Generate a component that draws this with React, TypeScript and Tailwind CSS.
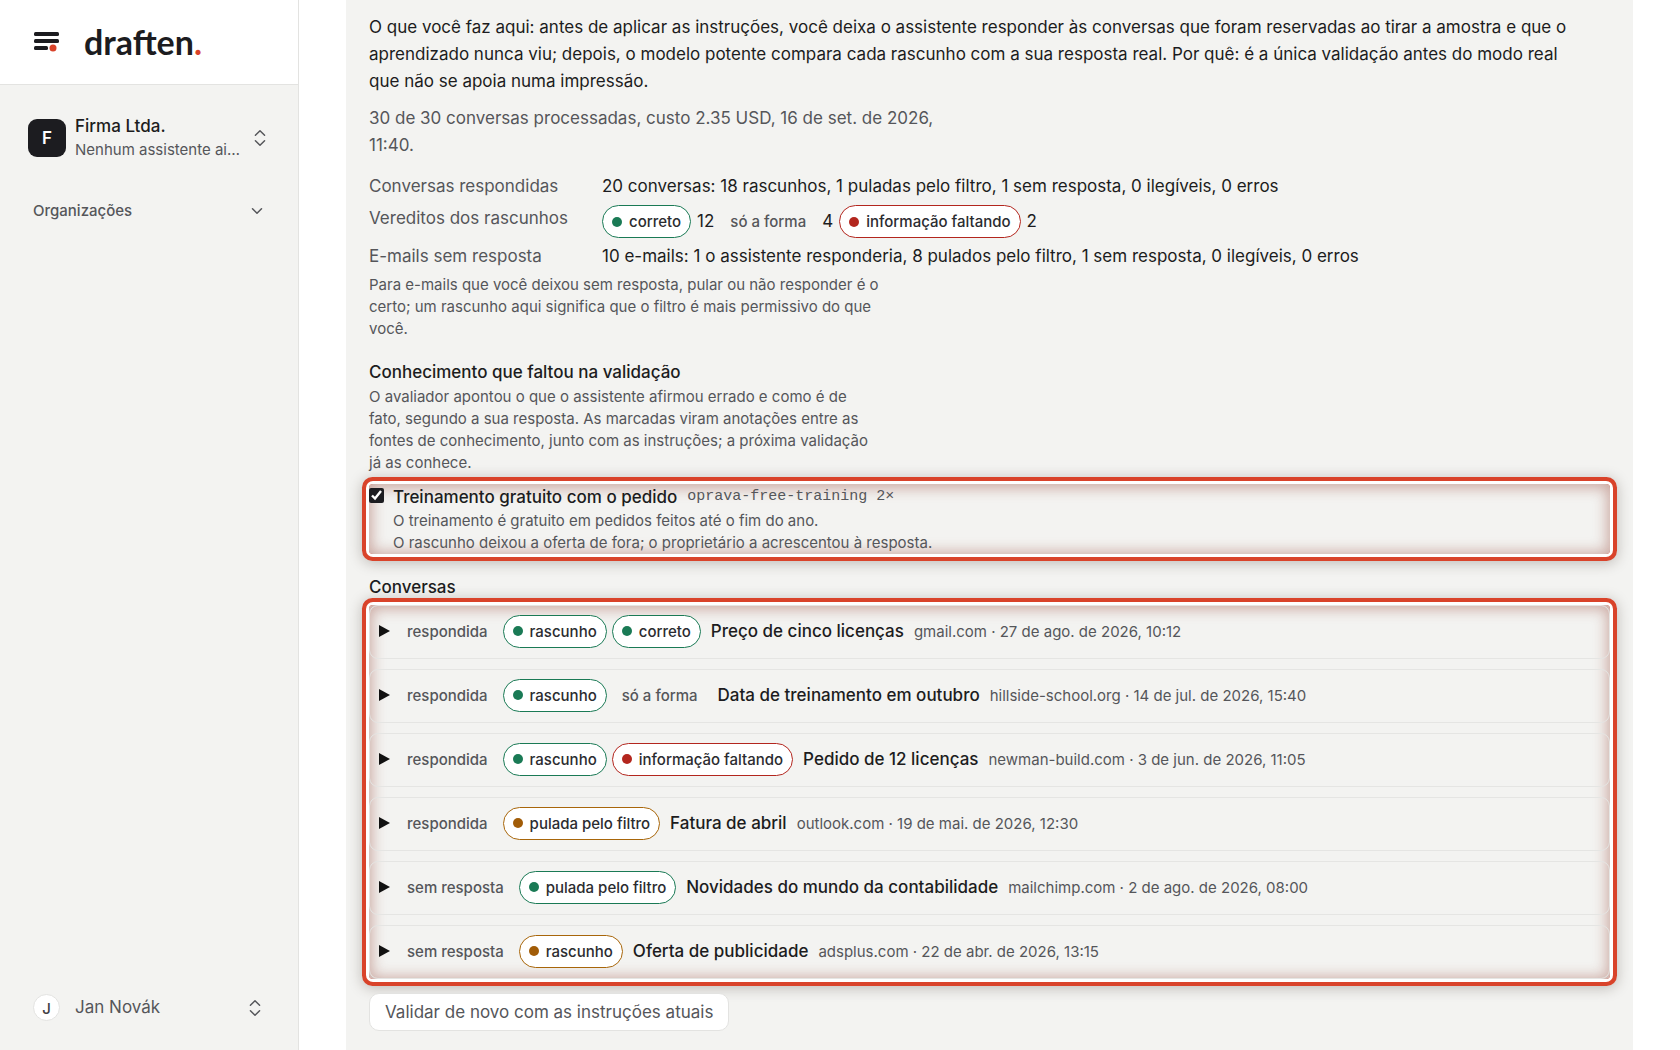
import React from "react";
import { ChevronDown, ChevronsUpDown } from "lucide-react";

type Tone = "green" | "red" | "amber" | "plain";

const ring =
  "rounded-[4px] shadow-[0_0_0_3px_#ffffff,0_0_0_7px_#d9432a,0_2px_14px_7px_rgba(50,35,25,0.28),inset_0_1px_14px_3px_rgba(140,50,35,0.38)]";

const border: Record<Tone, string> = {
  green: "border-[#1a7a55]",
  red: "border-[#b3261e]",
  amber: "border-[#a8660a]",
  plain: "",
};
const dot: Record<Tone, string> = {
  green: "bg-[#1a7a55]",
  red: "bg-[#b3261e]",
  amber: "bg-[#a15c07]",
  plain: "",
};

function Pill({ tone, children }: { tone: Tone; children: React.ReactNode }) {
  if (tone === "plain")
    return <span className="px-[10px] text-[15px] font-medium text-[#55565a]">{children}</span>;
  return (
    <span
      className={`inline-flex h-[33px] items-center gap-[7px] rounded-full border bg-white px-[9px] text-[15px] font-medium text-[#2b2c30] ${border[tone]}`}
    >
      <span className={`size-[10px] rounded-full ${dot[tone]}`} />
      {children}
    </span>
  );
}

type Row = { kind: string; pills: [Tone, string][]; title: string; meta: string };

const rows: Row[] = [
  { kind: "respondida", pills: [["green", "rascunho"], ["green", "correto"]], title: "Preço de cinco licenças", meta: "gmail.com · 27 de ago. de 2026, 10:12" },
  { kind: "respondida", pills: [["green", "rascunho"], ["plain", "só a forma"]], title: "Data de treinamento em outubro", meta: "hillside-school.org · 14 de jul. de 2026, 15:40" },
  { kind: "respondida", pills: [["green", "rascunho"], ["red", "informação faltando"]], title: "Pedido de 12 licenças", meta: "newman-build.com · 3 de jun. de 2026, 11:05" },
  { kind: "respondida", pills: [["amber", "pulada pelo filtro"]], title: "Fatura de abril", meta: "outlook.com · 19 de mai. de 2026, 12:30" },
  { kind: "sem resposta", pills: [["green", "pulada pelo filtro"]], title: "Novidades do mundo da contabilidade", meta: "mailchimp.com · 2 de ago. de 2026, 08:00" },
  { kind: "sem resposta", pills: [["amber", "rascunho"]], title: "Oferta de publicidade", meta: "adsplus.com · 22 de abr. de 2026, 13:15" },
];

function Sidebar() {
  return (
    <aside className="flex w-[299px] shrink-0 flex-col border-r border-[#e3e3e1] bg-[#f3f3f1]">
      <a href="#" className="flex h-[85px] items-center gap-6 border-b border-[#e3e3e1] bg-white pl-[33px]">
        <svg width="27" height="20" viewBox="0 0 27 20" aria-hidden="true">
          <g fill="#1c1c20">
            <rect x="1" y="0" width="25" height="4" rx="1.5" />
            <rect x="1" y="7" width="25" height="4" rx="1.5" />
            <rect x="1" y="14" width="14" height="4" rx="1.5" />
          </g>
          <circle cx="20" cy="16" r="4.5" fill="#fff" />
          <circle cx="20" cy="16" r="3.5" fill="#d9432a" />
        </svg>
        <span className="font-['Lato',sans-serif] text-[34px] leading-none font-bold text-[#1c1c20]">
          draften<span className="text-[#d9432a]">.</span>
        </span>
      </a>
      <button type="button" className="mt-[29px] flex items-center pr-[27px] pl-[28px] text-left">
        <span className="grid size-[38px] shrink-0 place-items-center rounded-[9px] bg-[#1c1c20] text-[17px] font-semibold text-white">F</span>
        <span className="ml-[9px]">
          <span className="block text-[17px] leading-[24px] font-medium text-[#1c1c20]">Firma Ltda.</span>
          <span className="block text-[15px] leading-[24px] text-[#55565a]">Nenhum assistente ai…</span>
        </span>
        <ChevronsUpDown className="ml-auto size-[22px] text-[#55565a]" strokeWidth={1.6} />
      </button>
      <button type="button" className="mt-[37px] flex items-center justify-between pr-[32px] pl-[33px] text-[15px] font-medium leading-[24px] text-[#55565a]">
        Organizações
        <ChevronDown className="size-[18px]" strokeWidth={2} />
      </button>
      <button type="button" className="mt-auto mb-[29px] flex items-center pr-[32px] pl-[33px] text-left">
        <span className="grid size-[27px] place-items-center rounded-full border border-[#e3e3e1] bg-white text-[15px] font-medium text-[#3f4044]">J</span>
        <span className="ml-[15px] text-[17px] text-[#55565a]">Jan Novák</span>
        <ChevronsUpDown className="ml-auto size-[22px] text-[#55565a]" strokeWidth={1.6} />
      </button>
    </aside>
  );
}

export default function App() {
  return (
    <div className="flex h-screen overflow-hidden bg-white font-['Inter',sans-serif] text-[17px] leading-[27px] text-[#1c1c20]">
      <Sidebar />
      <main className="min-w-0 flex-1 px-[47px]">
        <section className="min-h-full bg-[#f3f3f1] px-[23px] pt-[14px]">
          <p className="max-w-[1210px]">
            O que você faz aqui: antes de aplicar as instruções, você deixa o assistente responder às conversas que foram reservadas ao tirar a amostra e que o
            aprendizado nunca viu; depois, o modelo potente compara cada rascunho com a sua resposta real. Por quê: é a única validação antes do modo real que não se apoia numa impressão.
          </p>
          <p className="mt-[10px] max-w-[600px] text-[#55565a]">30 de 30 conversas processadas, custo 2.35 USD, 16 de set. de 2026, 11:40.</p>
          <dl className="mt-[14px] grid grid-cols-[205px_1fr] gap-x-[28px] gap-y-[5px]">
            <dt className="text-[#55565a]">Conversas respondidas</dt>
            <dd>20 conversas: 18 rascunhos, 1 puladas pelo filtro, 1 sem resposta, 0 ilegíveis, 0 erros</dd>
            <dt className="text-[#55565a]">Vereditos dos rascunhos</dt>
            <dd className="flex items-center gap-[6px]">
              <Pill tone="green">correto</Pill>12
              <Pill tone="plain">só a forma</Pill>4
              <Pill tone="red">informação faltando</Pill>2
            </dd>
            <dt className="text-[#55565a]">E-mails sem resposta</dt>
            <dd>10 e-mails: 1 o assistente responderia, 8 pulados pelo filtro, 1 sem resposta, 0 ilegíveis, 0 erros</dd>
          </dl>
          <p className="mt-[4px] max-w-[511px] text-[15px] leading-[22px] text-[#55565a]">
            Para e-mails que você deixou sem resposta, pular ou não responder é o certo; um rascunho aqui significa que o filtro é mais permissivo do que você.
          </p>
          <h3 className="mt-[19px] font-medium">Conhecimento que faltou na validação</h3>
          <p className="max-w-[511px] text-[15px] leading-[22px] text-[#55565a]">
            O avaliador apontou o que o assistente afirmou errado e como é de fato, segundo a sua resposta. As marcadas viram anotações entre as fontes de conhecimento, junto com as instruções; a próxima validação já as conhece.
          </p>
          <div className={`mt-[10px] flex items-start gap-[9px] ${ring}`}>
            <input id="k1" type="checkbox" defaultChecked className="mt-[4px] size-[15px] accent-[#1c1c20]" />
            <div className="text-[15px] leading-[22px] text-[#55565a]">
              <label htmlFor="k1" className="flex items-center gap-[10px]">
                <span className="text-[17px] leading-[26px] font-medium text-[#1c1c20]">Treinamento gratuito com o pedido</span>
                <span className="font-['Liberation_Mono',monospace] text-[15px]">oprava-free-training 2×</span>
              </label>
              <p>O treinamento é gratuito em pedidos feitos até o fim do ano.</p>
              <p>O rascunho deixou a oferta de fora; o proprietário a acrescentou à resposta.</p>
            </div>
          </div>
          <h3 className="mt-[20px] font-medium">Conversas</h3>
          <ul className={`mt-[4px] flex flex-col gap-[10px] ${ring}`}>
            {rows.map((r) => (
              <li key={r.title}>
                <button type="button" className="flex h-[54px] w-full items-center rounded-[9px] border border-[#e5e5e3] pb-[2px] pl-[9px] text-left">
                  <svg width="11" height="12" viewBox="0 0 11 12" aria-hidden="true"><path d="M0 0L11 6L0 12Z" fill="#111" /></svg>
                  <span className="ml-[17px] text-[15px] font-medium text-[#55565a]">{r.kind}</span>
                  <span className="ml-[15px] flex items-center gap-[5px]">
                    {r.pills.map(([t, label]) => <Pill key={label} tone={t}>{label}</Pill>)}
                  </span>
                  <span className="ml-[10px] font-medium">{r.title}</span>
                  <span className="ml-[10px] text-[15px] text-[#55565a]">{r.meta}</span>
                </button>
              </li>
            ))}
          </ul>
          <button type="button" className="mt-[14px] h-[38px] rounded-[10px] border border-[#e3e3e1] bg-white px-[15px] text-[#55565a]">
            Validar de novo com as instruções atuais
          </button>
        </section>
      </main>
    </div>
  );
}
